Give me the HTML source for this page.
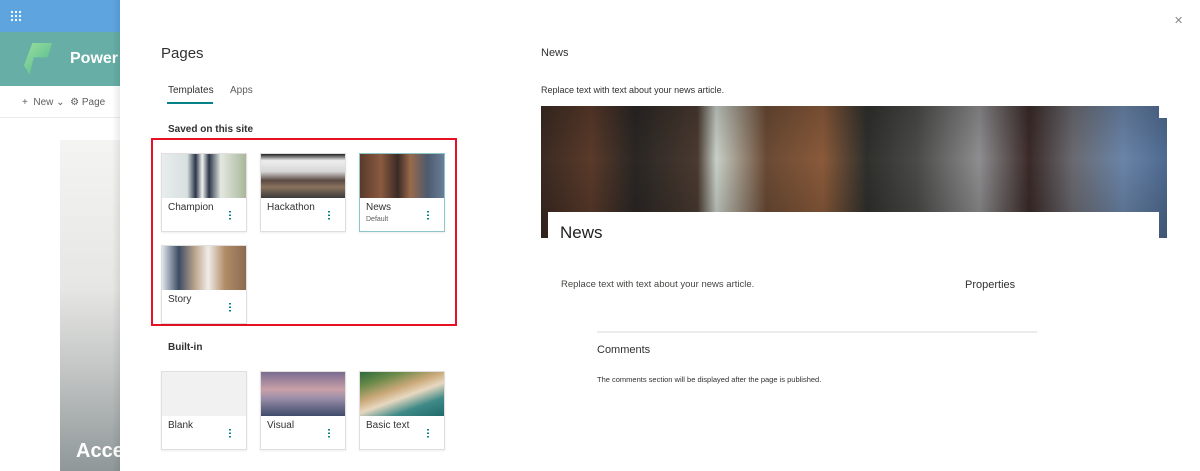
<!DOCTYPE html><html><head><style>
*{margin:0;padding:0;box-sizing:border-box}
body{width:1200px;height:471px;overflow:hidden;position:relative;font-family:"Liberation Sans",sans-serif;background:#fff;color:#323130}
.a{position:absolute}
.card{position:absolute;width:86px;height:79px;border:1px solid #e1dfdd;background:#fff;box-shadow:0 1px 2px rgba(0,0,0,.08)}
.card .img{height:44px}
.card .t{position:absolute;left:6px;top:48px;font-size:10px;color:#323130}
.card .s{position:absolute;left:6px;top:62px;font-size:7px;color:#605e5c}
.card .d{position:absolute;left:67px;top:56px;width:2px;height:10px;background:radial-gradient(circle,#038387 0.9px,transparent 1px) 0 0/2px 3.5px}
</style></head><body>
<div class="a" style="left:0;top:0;width:120px;height:32px;background:#5ea5e0"></div>
<div class="a" style="left:10px;top:10px;width:12px;height:12px;background:radial-gradient(circle,#fff 1px,transparent 1.3px) 0 0/4px 4px"></div>
<div class="a" style="left:0;top:32px;width:120px;height:54px;background:#66aea6"></div>
<div class="a" style="left:24px;top:43px;width:28px;height:32px;background:linear-gradient(135deg,#9de0a0,#4ab58a);clip-path:polygon(30% 0,100% 0,85% 45%,35% 45%,20% 100%,0 70%)"></div>
<div class="a" style="left:70px;top:50px;color:#fff;font-size:16px;font-weight:bold">Power</div>
<div class="a" style="left:22px;top:97px;font-size:10px;color:#605e5c">+ &nbsp;New ⌄ &nbsp;⚙ Page</div>
<div class="a" style="left:0;top:117px;width:120px;height:1px;background:#edebe9"></div>
<div class="a" style="left:60px;top:140px;width:60px;height:331px;background:linear-gradient(#f4f4f3,#e6e6e4 45%,#c2c5c4 70%,#8f9798)"></div>
<div class="a" style="left:76px;top:440px;color:#fff;font-size:20px;font-weight:bold">Acce</div>
<div class="a" style="left:112px;top:0;width:8px;height:471px;background:linear-gradient(90deg,transparent,rgba(0,0,0,.08))"></div>
<div class="a" style="left:120px;top:0;width:1080px;height:471px;background:#fff"></div>
<div class="a" style="left:1174px;top:14px;font-size:11px;color:#8a8886">✕</div>
<div class="a" style="left:161px;top:45px;font-size:15px;color:#323130">Pages</div>
<div class="a" style="left:168px;top:85px;font-size:10px">Templates</div>
<div class="a" style="left:167px;top:102px;width:46px;height:2px;background:#038387"></div>
<div class="a" style="left:230px;top:85px;font-size:10px;color:#605e5c">Apps</div>
<div class="a" style="left:168px;top:124px;font-size:10px;font-weight:bold">Saved on this site</div>
<div class="a" style="left:151px;top:138px;width:306px;height:188px;border:2px solid #e81123"></div>
<div class="card" style="left:161px;top:153px"><div class="img" style="background:linear-gradient(90deg,#e8ecec 0,#d8e0e0 30%,#2c3648 40%,#f2f2f2 48%,#2c3648 56%,#e4e8e0 70%,#a9b79a)"></div><div class="t">Champion</div><div class="d"></div></div>
<div class="card" style="left:260px;top:153px"><div class="img" style="background:linear-gradient(#222 0,#eee 15%,#d6d6d6 40%,#5b4a44 60%,#8a735d 75%,#3a3a3a)"></div><div class="t">Hackathon</div><div class="d"></div></div>
<div class="card" style="left:359px;top:153px;border-color:#8cc6c8"><div class="img" style="background:linear-gradient(90deg,#5a3a2c,#8a5a40 25%,#3b2a26 45%,#9a6a4a 60%,#4d5a6e 80%,#6a7e98)"></div><div class="t">News</div><div class="s">Default</div><div class="d"></div></div>
<div class="card" style="left:161px;top:245px"><div class="img" style="background:linear-gradient(90deg,#dfe6ee,#3d4c63 20%,#c0a890 40%,#f0ece8 55%,#b28c68 75%,#8a6a50)"></div><div class="t">Story</div><div class="d"></div></div>
<div class="a" style="left:168px;top:342px;font-size:10px;font-weight:bold">Built-in</div>
<div class="card" style="left:161px;top:371px"><div class="img" style="background:#f1f1f1"></div><div class="t">Blank</div><div class="d"></div></div>
<div class="card" style="left:260px;top:371px"><div class="img" style="background:linear-gradient(#7a6c90,#c9a0a8 40%,#9a8da8 60%,#3e4a6a)"></div><div class="t">Visual</div><div class="d"></div></div>
<div class="card" style="left:359px;top:371px"><div class="img" style="background:linear-gradient(160deg,#2f6a3a 0,#6a8a4a 20%,#c9a878 40%,#e8d8c0 55%,#3f8a88 75%,#1f6a6a)"></div><div class="t">Basic text</div><div class="d"></div></div>
<div class="a" style="left:541px;top:47px;font-size:11px">News</div>
<div class="a" style="left:541px;top:85px;font-size:9px;color:#323130">Replace text with text about your news article.</div>
<div class="a" style="left:541px;top:106px;width:626px;height:132px;background:linear-gradient(90deg,#3a2a22 0,#5a3a2a 8%,#2a2624 15%,#4a3a30 25%,#c8d0c8 28%,#6a4a34 36%,#8a5a3a 45%,#2f302c 52%,#4a4a48 60%,#8e8e90 70%,#3a2a28 78%,#6a6a70 85%,#6a84a8 93%,#4e6a90)"></div>
<div class="a" style="left:541px;top:106px;width:626px;height:132px;background:linear-gradient(rgba(0,0,0,.15),transparent 40%,rgba(0,0,0,.2))"></div>
<div class="a" style="left:1159px;top:106px;width:8px;height:12px;background:#fff"></div>
<div class="a" style="left:548px;top:212px;width:611px;height:26px;background:#fff"></div>
<div class="a" style="left:560px;top:223px;font-size:17px;color:#201f1e">News</div>
<div class="a" style="left:561px;top:279px;font-size:9.5px;color:#484644">Replace text with text about your news article.</div>
<div class="a" style="left:965px;top:279px;font-size:11px">Properties</div>
<div class="a" style="left:597px;top:331px;width:440px;height:2px;background:#edebe9"></div>
<div class="a" style="left:597px;top:344px;font-size:11px">Comments</div>
<div class="a" style="left:597px;top:375px;font-size:7.5px">The comments section will be displayed after the page is published.</div>
</body></html>
